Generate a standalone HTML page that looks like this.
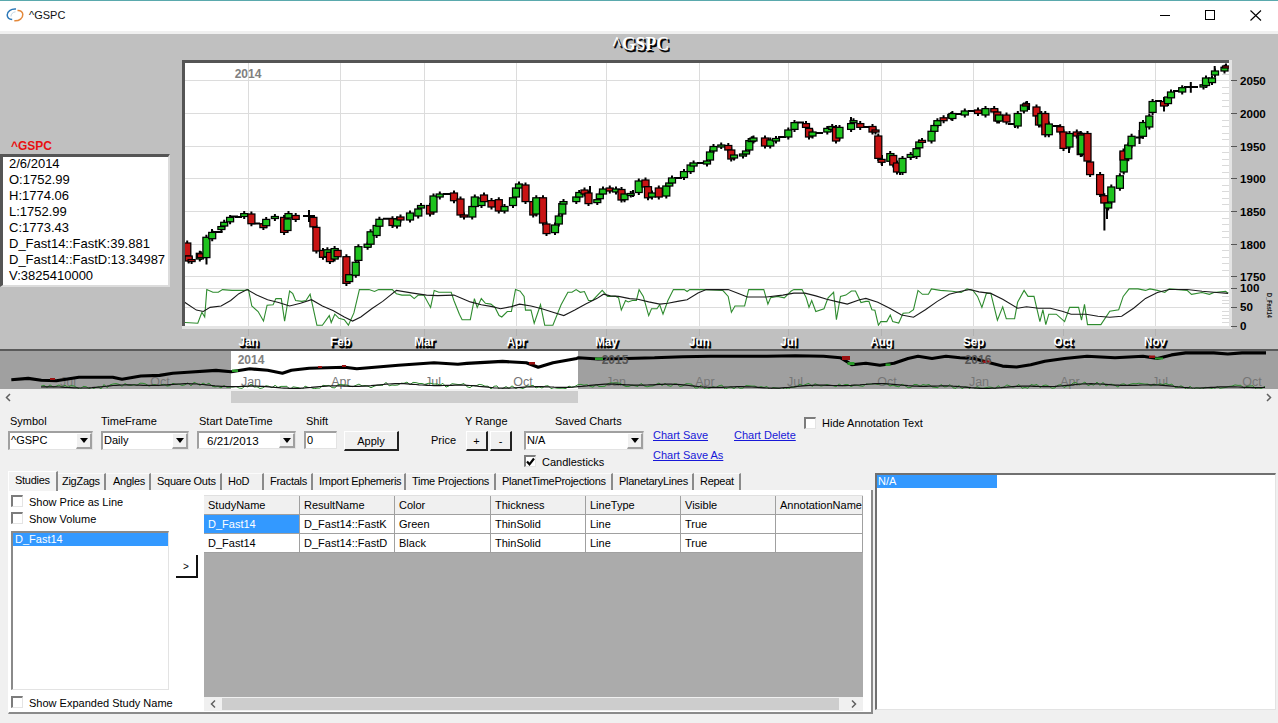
<!DOCTYPE html><html><head><meta charset="utf-8"><style>html,body{margin:0;padding:0}
body{width:1278px;height:723px;overflow:hidden;background:#f0f0f0;font-family:"Liberation Sans",sans-serif;font-size:11px;color:#000;position:relative}
.a{position:absolute}
.t{position:absolute;white-space:nowrap;line-height:13px}
.sunk{position:absolute;background:#fff;box-sizing:border-box;border-top:2px solid #a0a0a0;border-left:2px solid #a0a0a0;border-right:1px solid #e3e3e3;border-bottom:1px solid #e3e3e3}
.dd{position:absolute;box-sizing:border-box;background:#f0f0f0;border-right:2px solid #a0a0a0;border-bottom:2px solid #a0a0a0;border-top:1px solid #fff;border-left:1px solid #fff}
.dd:after{content:"";position:absolute;left:3px;top:4px;border-left:4px solid transparent;border-right:4px solid transparent;border-top:5px solid #000}
.btn{position:absolute;box-sizing:border-box;background:#f0f0f0;border-top:1px solid #fff;border-left:1px solid #fff;border-right:2px solid #222;border-bottom:2px solid #222;text-align:center}
.cb{position:absolute;box-sizing:border-box;width:12px;height:12px;background:#fff;border-top:2px solid #7c7c7c;border-left:2px solid #7c7c7c;border-right:1px solid #e4e4e4;border-bottom:1px solid #e4e4e4}
.lnk{color:#1818d8;text-decoration:underline}
.tab{position:absolute;top:473px;height:17px;border-right:2px solid #8a8a8a;border-top:1px solid #fbfbfb;box-sizing:border-box}
.gh{position:absolute;top:496px;height:19px;background:#f0f0f0;box-sizing:border-box;border-right:1px solid #a0a0a0;border-bottom:1px solid #a0a0a0}
.gc{position:absolute;height:19px;background:#fff;box-sizing:border-box;border-right:1px solid #a0a0a0;border-bottom:1px solid #a0a0a0}
</style></head><body><svg class="a" style="left:0;top:0" width="1278" height="405" font-family="Liberation Sans"><defs><clipPath id="pc"><rect x="185" y="63" width="1044" height="263"/></clipPath></defs><rect x="0" y="34" width="1278" height="316" fill="#c0c0c0"/><text x="0" y="0" transform="translate(642,52) scale(0.93,1)" text-anchor="middle" font-family="Liberation Serif" font-weight="bold" font-size="19" fill="#000" stroke="#000" stroke-width="0.5">^GSPC</text><text x="0" y="0" transform="translate(640.3,50.3) scale(0.93,1)" text-anchor="middle" font-family="Liberation Serif" font-weight="bold" font-size="19" fill="#fff">^GSPC</text><rect x="182" y="60" width="1050" height="269" fill="#e4e4e4"/><rect x="182" y="60" width="1047" height="266" fill="#555"/><rect x="185" y="63" width="1044" height="263" fill="#fff"/><path d="M185 276.5 H1229 M185 244.5 H1229 M185 211.5 H1229 M185 178.5 H1229 M185 146.5 H1229 M185 113.5 H1229 M185 80.5 H1229 M185 288.5 H1229 M185 307.5 H1229 M248.5 63 V326 M340.5 63 V326 M424.5 63 V326 M516.5 63 V326 M606.5 63 V326 M699.5 63 V326 M788.5 63 V326 M881.5 63 V326 M973.5 63 V326 M1063.5 63 V326 M1155.5 63 V326" stroke="#dcdcdc" stroke-width="1" fill="none"/><path d="M248.5 329 V336 M340.5 329 V336 M424.5 329 V336 M516.5 329 V336 M606.5 329 V336 M699.5 329 V336 M788.5 329 V336 M881.5 329 V336 M973.5 329 V336 M1063.5 329 V336 M1155.5 329 V336" stroke="#b0b0b0" stroke-width="1" fill="none"/><path d="M1222 270.5 H1229 M1222 263.5 H1229 M1222 257.5 H1229 M1222 250.5 H1229 M1222 237.5 H1229 M1222 231.5 H1229 M1222 224.5 H1229 M1222 218.5 H1229 M1222 204.5 H1229 M1222 198.5 H1229 M1222 191.5 H1229 M1222 185.5 H1229 M1222 172.5 H1229 M1222 165.5 H1229 M1222 159.5 H1229 M1222 152.5 H1229 M1222 139.5 H1229 M1222 133.5 H1229 M1222 126.5 H1229 M1222 120.5 H1229 M1222 106.5 H1229 M1222 100.5 H1229 M1222 93.5 H1229 M1222 87.5 H1229 M1222 74.5 H1229 M1222 67.5 H1229 M1222 322.5 H1229 M1222 318.5 H1229 M1222 315.5 H1229 M1222 311.5 H1229 M1222 303.5 H1229 M1222 300.5 H1229 M1222 296.5 H1229 M1222 292.5 H1229" stroke="#dadada" stroke-width="1" fill="none"/><text x="248" y="78" text-anchor="middle" font-weight="bold" font-size="12" fill="#808080">2014</text><g clip-path="url(#pc)"><path d="M187.2 240.5 V258.5 M188.7 253.5 V263.5 M191.6 257.1 V264 M199.8 250.8 V261.5 M200.9 251.3 V260.1 M206.4 234.8 V260.1 M212.2 229.9 V241.2 M221.4 224.1 V232 M224.2 219.8 V228.5 M230.1 214.9 V224.3 M244.2 211.1 V219 M251.4 211.5 V226.2 M263.4 221.2 V230.1 M266.2 216.9 V228.2 M274.9 214 V220.9 M284.1 214.9 V234.9 M287.5 216.5 V233 M288.5 211.1 V220.5 M295.7 213 V221.9 M313.4 214.9 V229.3 M316.4 224.9 V253.5 M323 247.9 V259.8 M327.4 247.3 V259.2 M329.9 249.8 V264.1 M334.6 246.1 V261.5 M337.6 247.9 V259.2 M346.4 254.2 V285.9 M349.2 272.2 V284.1 M355.8 259.8 V277.8 M358.4 244.2 V262.9 M367.6 241.7 V249.8 M370.6 229.3 V246.7 M376.6 223 V238 M379.4 216.8 V228.7 M392.5 216.2 V228 M397 216.5 V228.5 M400.5 214.5 V222.5 M410 210.5 V222.5 M418.2 206.5 V218.5 M421 203 V210.5 M430 203 V216.5 M433.5 193.5 V214.5 M439.8 191.5 V199.5 M454 190.5 V203.2 M460.5 196.5 V217.5 M464 212.5 V219.5 M472.2 204 V219.5 M474.8 194.5 V209 M481.5 195.5 V208 M484 192.5 V204.1 M491.5 198.1 V209.5 M498.8 197.2 V213.5 M504.5 204 V213.5 M513 195.3 V208 M516 185.5 V199.5 M519 181.5 V190.5 M525.5 182.5 V204.1 M533.2 199.1 V217.5 M536.3 195.3 V216.5 M543 195.3 V225.5 M546.5 221.5 V236.1 M555 222.5 V235.1 M558.8 213.5 V226.5 M562.2 201.1 V216.5 M563.5 199.1 V206.5 M576.3 194.5 V204.1 M579.2 190 V199.5 M584.5 187.5 V196.5 M588.5 190.5 V206.1 M597.3 197.2 V205.1 M599.8 191.5 V201.2 M603 186.5 V196.5 M609.8 185.5 V193.5 M616 186.5 V194.5 M621.5 187 V202.5 M624.5 191.5 V202.2 M630.8 191 V197.5 M638.8 178.5 V195 M645.5 177.5 V189.5 M648 184.2 V200.3 M652 190.5 V199.5 M658.8 185.5 V199.5 M666.3 183.5 V198.5 M669.2 180.5 V188.5 M672 175.5 V185.5 M684 169.1 V180 M690.6 162.5 V174.1 M693.6 160.5 V168.5 M707 158.5 V166.5 M710 149.5 V162.5 M713.5 144 V153.5 M721.2 142.5 V149 M728.3 143 V152.5 M731.2 147.5 V161.5 M734 152.5 V160.5 M743 151.5 V158.5 M746 148.5 V156.5 M749.3 138.1 V152.5 M751.8 136.2 V144.1 M753.5 135.5 V143.5 M765 135.5 V148.5 M770.2 137.5 V148.5 M776 136 V143.5 M788.3 127.5 V139.5 M794.5 120.1 V131.9 M806 121.1 V129.9 M809 125.9 V139.5 M812.5 129.5 V138.5 M827.3 125.9 V134.5 M832.2 124 V131.9 M836 124.9 V143.5 M839.5 124.9 V140.5 M851.1 121.1 V131.9 M853.5 118.2 V125.1 M860.2 121.1 V129.9 M872.5 124 V134.5 M875.5 127.5 V134.5 M878.3 133.5 V160.9 M881.6 156.9 V164.8 M890.2 151.1 V163.8 M893.2 153 V167.5 M897 160.5 V174.5 M902.5 155.9 V175 M910.7 152 V159.9 M916.5 146.2 V159 M919.2 139.5 V150.3 M922 137.9 V144.8 M931.5 128.8 V143.5 M934.4 123 V133.8 M937.4 118.2 V128 M943.6 115.3 V123.2 M951.2 112 V120.3 M952.4 111 V121 M964.8 108.5 V117.5 M978 107.5 V116 M985.5 106.1 V117.5 M994.2 106.1 V114.5 M997.2 109.5 V123.5 M999 112.5 V123.5 M1006.5 112.5 V124.5 M1017.8 111 V128.5 M1023.9 102.5 V113.5 M1026 101.5 V108.5 M1036.5 104.5 V118.5 M1039 113.5 V127.5 M1041.3 111 V127.5 M1045.3 111 V137.2 M1048.8 121.5 V137.2 M1060.2 124.2 V134.5 M1063.5 129.5 V150.9 M1069.5 131 V149.5 M1076.8 129.5 V138.5 M1080.8 131 V157.1 M1082 132.5 V156.5 M1087.5 131 V163.5 M1090.1 159.5 V177.1 M1100.1 172.1 V197 M1104.3 193.2 V205.5 M1108.2 200.5 V210.5 M1111.3 184.5 V204.5 M1119.9 173.3 V190.8 M1123.7 149.5 V174.5 M1123.5 148.5 V162.5 M1128.3 142.5 V161.3 M1131.6 133.8 V148.3 M1143 120 V138.8 M1149.3 113.5 V129.5 M1152.6 99 V114.9 M1164 99 V108.5 M1168 94.5 V106.1 M1171 89.5 V100.3 M1182.2 85.2 V94.5 M1203.5 82.3 V89.5 M1206 75.5 V88 M1212 75.5 V85.1 M1215 68.5 V77.5 M1224.5 64.8 V73.5 M1226 63.5 V70.5 M206.5 237 V264.4 M212 229 V233 M1104.4 203 V230.6 M1107 205 V219 M1139.5 130 V144 M1164 97 V111.6 M1190.8 82 V92.7 M1214.7 66 V71 M1069 140 V153 M1088 150 V165 M309 210 V222 M355 265 V270 M882 155 V166 M900 165 V175 M633 190 V197 M590 186 V193 M851 117 V124 M1015 120 V128 M1027 101 V106 M1125 145 V160 M1029 103 V110" stroke="#000" stroke-width="2" fill="none"/><path d="M213 232 H222.6 M230 216.5 H238 M235 217 H242 M251 223.5 H260 M303 216 H315 M383 218.7 H392 M443 194 H450 M674 178 H682 M697 163 H705 M778 137 H786 M796 122.6 H804 M815 133 H823 M862 127 H870 M955 114 H963 M968 111 H976 M1008 124 H1016 M1053 126 H1061 M1135.6 137.5 H1144 M1155 101 H1162 M1173 91 H1180 M1184 87 H1192 M1190 87 H1198" stroke="#000" stroke-width="2" fill="none"/><rect x="183.8" y="243" width="7" height="13" fill="#c81414" stroke="#000" stroke-width="1.25"/><rect x="185.2" y="256" width="7" height="5" fill="#c81414" stroke="#000" stroke-width="1.25"/><rect x="188.1" y="259.6" width="7" height="2" fill="#c81414" stroke="#000" stroke-width="1.25"/><rect x="196.3" y="253.3" width="7" height="5.7" fill="#1ec31e" stroke="#000" stroke-width="1.25"/><rect x="197.4" y="253.8" width="7" height="3.8" fill="#c81414" stroke="#000" stroke-width="1.25"/><rect x="202.9" y="237.3" width="7" height="20.3" fill="#1ec31e" stroke="#000" stroke-width="1.25"/><rect x="208.7" y="232.4" width="7" height="6.3" fill="#1ec31e" stroke="#000" stroke-width="1.25"/><rect x="217.9" y="226.6" width="7" height="2.9" fill="#1ec31e" stroke="#000" stroke-width="1.25"/><rect x="220.7" y="222.3" width="7" height="3.7" fill="#1ec31e" stroke="#000" stroke-width="1.25"/><rect x="226.6" y="217.4" width="7" height="4.4" fill="#1ec31e" stroke="#000" stroke-width="1.25"/><rect x="240.7" y="213.6" width="7" height="2.9" fill="#1ec31e" stroke="#000" stroke-width="1.25"/><rect x="247.9" y="214" width="7" height="9.7" fill="#c81414" stroke="#000" stroke-width="1.25"/><rect x="259.9" y="223.7" width="7" height="3.9" fill="#c81414" stroke="#000" stroke-width="1.25"/><rect x="262.7" y="219.4" width="7" height="6.3" fill="#1ec31e" stroke="#000" stroke-width="1.25"/><rect x="271.4" y="216.5" width="7" height="2" fill="#1ec31e" stroke="#000" stroke-width="1.25"/><rect x="280.6" y="217.4" width="7" height="15" fill="#c81414" stroke="#000" stroke-width="1.25"/><rect x="284" y="219" width="7" height="11.5" fill="#1ec31e" stroke="#000" stroke-width="1.25"/><rect x="285" y="213.6" width="7" height="4.4" fill="#1ec31e" stroke="#000" stroke-width="1.25"/><rect x="292.2" y="215.5" width="7" height="3.9" fill="#c81414" stroke="#000" stroke-width="1.25"/><rect x="309.9" y="217.4" width="7" height="9.4" fill="#c81414" stroke="#000" stroke-width="1.25"/><rect x="312.9" y="227.4" width="7" height="23.6" fill="#c81414" stroke="#000" stroke-width="1.25"/><rect x="319.5" y="250.4" width="7" height="6.9" fill="#c81414" stroke="#000" stroke-width="1.25"/><rect x="323.9" y="249.8" width="7" height="6.9" fill="#1ec31e" stroke="#000" stroke-width="1.25"/><rect x="326.4" y="252.3" width="7" height="9.3" fill="#c81414" stroke="#000" stroke-width="1.25"/><rect x="331.1" y="248.6" width="7" height="10.4" fill="#1ec31e" stroke="#000" stroke-width="1.25"/><rect x="334.1" y="250.4" width="7" height="6.3" fill="#c81414" stroke="#000" stroke-width="1.25"/><rect x="342.9" y="256.7" width="7" height="26.7" fill="#c81414" stroke="#000" stroke-width="1.25"/><rect x="345.7" y="274.7" width="7" height="6.9" fill="#1ec31e" stroke="#000" stroke-width="1.25"/><rect x="352.2" y="262.3" width="7" height="13" fill="#1ec31e" stroke="#000" stroke-width="1.25"/><rect x="354.9" y="246.7" width="7" height="13.7" fill="#1ec31e" stroke="#000" stroke-width="1.25"/><rect x="364.1" y="244.2" width="7" height="3.1" fill="#1ec31e" stroke="#000" stroke-width="1.25"/><rect x="367.1" y="231.8" width="7" height="12.4" fill="#1ec31e" stroke="#000" stroke-width="1.25"/><rect x="373.1" y="225.5" width="7" height="10" fill="#1ec31e" stroke="#000" stroke-width="1.25"/><rect x="375.9" y="219.3" width="7" height="6.9" fill="#1ec31e" stroke="#000" stroke-width="1.25"/><rect x="389" y="218.7" width="7" height="6.8" fill="#c81414" stroke="#000" stroke-width="1.25"/><rect x="393.5" y="219" width="7" height="7" fill="#1ec31e" stroke="#000" stroke-width="1.25"/><rect x="397" y="217" width="7" height="3" fill="#c81414" stroke="#000" stroke-width="1.25"/><rect x="406.5" y="213" width="7" height="7" fill="#1ec31e" stroke="#000" stroke-width="1.25"/><rect x="414.8" y="209" width="7" height="7" fill="#1ec31e" stroke="#000" stroke-width="1.25"/><rect x="417.5" y="205.5" width="7" height="2.5" fill="#1ec31e" stroke="#000" stroke-width="1.25"/><rect x="426.5" y="205.5" width="7" height="8.5" fill="#c81414" stroke="#000" stroke-width="1.25"/><rect x="430" y="196" width="7" height="16" fill="#1ec31e" stroke="#000" stroke-width="1.25"/><rect x="436.2" y="194" width="7" height="3" fill="#1ec31e" stroke="#000" stroke-width="1.25"/><rect x="450.5" y="193" width="7" height="7.7" fill="#c81414" stroke="#000" stroke-width="1.25"/><rect x="457" y="199" width="7" height="16" fill="#c81414" stroke="#000" stroke-width="1.25"/><rect x="460.5" y="215" width="7" height="2" fill="#c81414" stroke="#000" stroke-width="1.25"/><rect x="468.8" y="206.5" width="7" height="10.5" fill="#1ec31e" stroke="#000" stroke-width="1.25"/><rect x="471.3" y="197" width="7" height="9.5" fill="#1ec31e" stroke="#000" stroke-width="1.25"/><rect x="478" y="198" width="7" height="7.5" fill="#1ec31e" stroke="#000" stroke-width="1.25"/><rect x="480.5" y="195" width="7" height="6.6" fill="#c81414" stroke="#000" stroke-width="1.25"/><rect x="488" y="200.6" width="7" height="6.4" fill="#c81414" stroke="#000" stroke-width="1.25"/><rect x="495.3" y="199.7" width="7" height="11.3" fill="#c81414" stroke="#000" stroke-width="1.25"/><rect x="501" y="206.5" width="7" height="4.5" fill="#1ec31e" stroke="#000" stroke-width="1.25"/><rect x="509.5" y="197.8" width="7" height="7.7" fill="#1ec31e" stroke="#000" stroke-width="1.25"/><rect x="512.5" y="188" width="7" height="9" fill="#1ec31e" stroke="#000" stroke-width="1.25"/><rect x="515.5" y="184" width="7" height="4" fill="#1ec31e" stroke="#000" stroke-width="1.25"/><rect x="522" y="185" width="7" height="16.6" fill="#c81414" stroke="#000" stroke-width="1.25"/><rect x="529.8" y="201.6" width="7" height="13.4" fill="#c81414" stroke="#000" stroke-width="1.25"/><rect x="532.8" y="197.8" width="7" height="16.2" fill="#1ec31e" stroke="#000" stroke-width="1.25"/><rect x="539.5" y="197.8" width="7" height="25.2" fill="#c81414" stroke="#000" stroke-width="1.25"/><rect x="543" y="224" width="7" height="9.6" fill="#c81414" stroke="#000" stroke-width="1.25"/><rect x="551.5" y="225" width="7" height="7.6" fill="#1ec31e" stroke="#000" stroke-width="1.25"/><rect x="555.3" y="216" width="7" height="8" fill="#1ec31e" stroke="#000" stroke-width="1.25"/><rect x="558.8" y="203.6" width="7" height="10.4" fill="#1ec31e" stroke="#000" stroke-width="1.25"/><rect x="560" y="201.6" width="7" height="2.4" fill="#1ec31e" stroke="#000" stroke-width="1.25"/><rect x="572.8" y="197" width="7" height="4.6" fill="#1ec31e" stroke="#000" stroke-width="1.25"/><rect x="575.8" y="192.5" width="7" height="4.5" fill="#1ec31e" stroke="#000" stroke-width="1.25"/><rect x="581" y="190" width="7" height="4" fill="#c81414" stroke="#000" stroke-width="1.25"/><rect x="585" y="193" width="7" height="10.6" fill="#c81414" stroke="#000" stroke-width="1.25"/><rect x="593.8" y="199.7" width="7" height="2.9" fill="#1ec31e" stroke="#000" stroke-width="1.25"/><rect x="596.3" y="194" width="7" height="4.7" fill="#1ec31e" stroke="#000" stroke-width="1.25"/><rect x="599.5" y="189" width="7" height="5" fill="#1ec31e" stroke="#000" stroke-width="1.25"/><rect x="606.2" y="188" width="7" height="3" fill="#c81414" stroke="#000" stroke-width="1.25"/><rect x="612.5" y="189" width="7" height="3" fill="#1ec31e" stroke="#000" stroke-width="1.25"/><rect x="618" y="189.5" width="7" height="10.5" fill="#c81414" stroke="#000" stroke-width="1.25"/><rect x="621" y="194" width="7" height="5.7" fill="#1ec31e" stroke="#000" stroke-width="1.25"/><rect x="627.2" y="193.5" width="7" height="2" fill="#1ec31e" stroke="#000" stroke-width="1.25"/><rect x="635.2" y="181" width="7" height="11.5" fill="#1ec31e" stroke="#000" stroke-width="1.25"/><rect x="642" y="180" width="7" height="7" fill="#c81414" stroke="#000" stroke-width="1.25"/><rect x="644.5" y="186.7" width="7" height="11.1" fill="#c81414" stroke="#000" stroke-width="1.25"/><rect x="648.5" y="193" width="7" height="4" fill="#1ec31e" stroke="#000" stroke-width="1.25"/><rect x="655.3" y="188" width="7" height="9" fill="#c81414" stroke="#000" stroke-width="1.25"/><rect x="662.8" y="186" width="7" height="10" fill="#1ec31e" stroke="#000" stroke-width="1.25"/><rect x="665.8" y="183" width="7" height="3" fill="#1ec31e" stroke="#000" stroke-width="1.25"/><rect x="668.5" y="178" width="7" height="5" fill="#1ec31e" stroke="#000" stroke-width="1.25"/><rect x="680.5" y="171.6" width="7" height="5.9" fill="#1ec31e" stroke="#000" stroke-width="1.25"/><rect x="687.1" y="165" width="7" height="6.6" fill="#1ec31e" stroke="#000" stroke-width="1.25"/><rect x="690.1" y="163" width="7" height="3" fill="#1ec31e" stroke="#000" stroke-width="1.25"/><rect x="703.5" y="161" width="7" height="3" fill="#1ec31e" stroke="#000" stroke-width="1.25"/><rect x="706.5" y="152" width="7" height="8" fill="#1ec31e" stroke="#000" stroke-width="1.25"/><rect x="710" y="146.5" width="7" height="4.5" fill="#1ec31e" stroke="#000" stroke-width="1.25"/><rect x="717.8" y="145" width="7" height="2" fill="#1ec31e" stroke="#000" stroke-width="1.25"/><rect x="724.8" y="145.5" width="7" height="4.5" fill="#c81414" stroke="#000" stroke-width="1.25"/><rect x="727.8" y="150" width="7" height="9" fill="#c81414" stroke="#000" stroke-width="1.25"/><rect x="730.5" y="155" width="7" height="3" fill="#1ec31e" stroke="#000" stroke-width="1.25"/><rect x="739.5" y="154" width="7" height="2" fill="#1ec31e" stroke="#000" stroke-width="1.25"/><rect x="742.5" y="151" width="7" height="3" fill="#1ec31e" stroke="#000" stroke-width="1.25"/><rect x="745.8" y="140.6" width="7" height="9.4" fill="#1ec31e" stroke="#000" stroke-width="1.25"/><rect x="748.2" y="138.7" width="7" height="2.9" fill="#1ec31e" stroke="#000" stroke-width="1.25"/><rect x="750" y="138" width="7" height="3" fill="#1ec31e" stroke="#000" stroke-width="1.25"/><rect x="761.5" y="138" width="7" height="8" fill="#c81414" stroke="#000" stroke-width="1.25"/><rect x="766.8" y="140" width="7" height="6" fill="#1ec31e" stroke="#000" stroke-width="1.25"/><rect x="772.5" y="138.5" width="7" height="2.5" fill="#1ec31e" stroke="#000" stroke-width="1.25"/><rect x="784.8" y="130" width="7" height="7" fill="#1ec31e" stroke="#000" stroke-width="1.25"/><rect x="791" y="122.6" width="7" height="6.8" fill="#1ec31e" stroke="#000" stroke-width="1.25"/><rect x="802.5" y="123.6" width="7" height="3.8" fill="#c81414" stroke="#000" stroke-width="1.25"/><rect x="805.5" y="128.4" width="7" height="8.6" fill="#c81414" stroke="#000" stroke-width="1.25"/><rect x="809" y="132" width="7" height="4" fill="#1ec31e" stroke="#000" stroke-width="1.25"/><rect x="823.8" y="128.4" width="7" height="3.6" fill="#1ec31e" stroke="#000" stroke-width="1.25"/><rect x="828.7" y="126.5" width="7" height="2.9" fill="#1ec31e" stroke="#000" stroke-width="1.25"/><rect x="832.5" y="127.4" width="7" height="13.6" fill="#c81414" stroke="#000" stroke-width="1.25"/><rect x="836" y="127.4" width="7" height="10.6" fill="#1ec31e" stroke="#000" stroke-width="1.25"/><rect x="847.6" y="123.6" width="7" height="5.8" fill="#1ec31e" stroke="#000" stroke-width="1.25"/><rect x="850" y="120.7" width="7" height="2" fill="#1ec31e" stroke="#000" stroke-width="1.25"/><rect x="856.8" y="123.6" width="7" height="3.8" fill="#c81414" stroke="#000" stroke-width="1.25"/><rect x="869" y="126.5" width="7" height="5.5" fill="#c81414" stroke="#000" stroke-width="1.25"/><rect x="872" y="130" width="7" height="2" fill="#c81414" stroke="#000" stroke-width="1.25"/><rect x="874.8" y="136" width="7" height="22.4" fill="#c81414" stroke="#000" stroke-width="1.25"/><rect x="878.1" y="159.4" width="7" height="2.9" fill="#c81414" stroke="#000" stroke-width="1.25"/><rect x="886.8" y="153.6" width="7" height="7.7" fill="#1ec31e" stroke="#000" stroke-width="1.25"/><rect x="889.7" y="155.5" width="7" height="9.5" fill="#c81414" stroke="#000" stroke-width="1.25"/><rect x="893.5" y="163" width="7" height="9" fill="#c81414" stroke="#000" stroke-width="1.25"/><rect x="899" y="158.4" width="7" height="14.1" fill="#1ec31e" stroke="#000" stroke-width="1.25"/><rect x="907.2" y="154.5" width="7" height="2.9" fill="#1ec31e" stroke="#000" stroke-width="1.25"/><rect x="913" y="148.7" width="7" height="7.8" fill="#1ec31e" stroke="#000" stroke-width="1.25"/><rect x="915.8" y="142" width="7" height="5.8" fill="#1ec31e" stroke="#000" stroke-width="1.25"/><rect x="918.5" y="140.4" width="7" height="2" fill="#c81414" stroke="#000" stroke-width="1.25"/><rect x="928" y="131.3" width="7" height="9.7" fill="#1ec31e" stroke="#000" stroke-width="1.25"/><rect x="930.9" y="125.5" width="7" height="5.8" fill="#1ec31e" stroke="#000" stroke-width="1.25"/><rect x="933.9" y="120.7" width="7" height="4.8" fill="#1ec31e" stroke="#000" stroke-width="1.25"/><rect x="940.1" y="117.8" width="7" height="2.9" fill="#c81414" stroke="#000" stroke-width="1.25"/><rect x="947.8" y="114.5" width="7" height="3.3" fill="#1ec31e" stroke="#000" stroke-width="1.25"/><rect x="948.9" y="113.5" width="7" height="5" fill="#1ec31e" stroke="#000" stroke-width="1.25"/><rect x="961.3" y="111" width="7" height="4" fill="#1ec31e" stroke="#000" stroke-width="1.25"/><rect x="974.5" y="110" width="7" height="3.5" fill="#c81414" stroke="#000" stroke-width="1.25"/><rect x="982" y="108.6" width="7" height="6.4" fill="#1ec31e" stroke="#000" stroke-width="1.25"/><rect x="990.8" y="108.6" width="7" height="3.4" fill="#c81414" stroke="#000" stroke-width="1.25"/><rect x="993.8" y="112" width="7" height="9" fill="#c81414" stroke="#000" stroke-width="1.25"/><rect x="995.5" y="115" width="7" height="6" fill="#1ec31e" stroke="#000" stroke-width="1.25"/><rect x="1003" y="115" width="7" height="7" fill="#c81414" stroke="#000" stroke-width="1.25"/><rect x="1014.2" y="113.5" width="7" height="12.5" fill="#1ec31e" stroke="#000" stroke-width="1.25"/><rect x="1020.4" y="105" width="7" height="6" fill="#1ec31e" stroke="#000" stroke-width="1.25"/><rect x="1022.5" y="104" width="7" height="2" fill="#c81414" stroke="#000" stroke-width="1.25"/><rect x="1033" y="107" width="7" height="9" fill="#c81414" stroke="#000" stroke-width="1.25"/><rect x="1035.5" y="116" width="7" height="9" fill="#c81414" stroke="#000" stroke-width="1.25"/><rect x="1037.8" y="113.5" width="7" height="11.5" fill="#1ec31e" stroke="#000" stroke-width="1.25"/><rect x="1041.8" y="113.5" width="7" height="21.2" fill="#c81414" stroke="#000" stroke-width="1.25"/><rect x="1045.3" y="124" width="7" height="10.7" fill="#1ec31e" stroke="#000" stroke-width="1.25"/><rect x="1056.8" y="126.7" width="7" height="5.3" fill="#c81414" stroke="#000" stroke-width="1.25"/><rect x="1060" y="132" width="7" height="16.4" fill="#c81414" stroke="#000" stroke-width="1.25"/><rect x="1066" y="133.5" width="7" height="13.5" fill="#1ec31e" stroke="#000" stroke-width="1.25"/><rect x="1073.3" y="132" width="7" height="4" fill="#c81414" stroke="#000" stroke-width="1.25"/><rect x="1077.2" y="133.5" width="7" height="21.1" fill="#c81414" stroke="#000" stroke-width="1.25"/><rect x="1078.5" y="135" width="7" height="19" fill="#1ec31e" stroke="#000" stroke-width="1.25"/><rect x="1084" y="133.5" width="7" height="27.5" fill="#c81414" stroke="#000" stroke-width="1.25"/><rect x="1086.6" y="162" width="7" height="12.6" fill="#c81414" stroke="#000" stroke-width="1.25"/><rect x="1096.6" y="174.6" width="7" height="19.9" fill="#c81414" stroke="#000" stroke-width="1.25"/><rect x="1100.8" y="195.7" width="7" height="7.3" fill="#c81414" stroke="#000" stroke-width="1.25"/><rect x="1104.7" y="203" width="7" height="5" fill="#1ec31e" stroke="#000" stroke-width="1.25"/><rect x="1107.8" y="187" width="7" height="15" fill="#1ec31e" stroke="#000" stroke-width="1.25"/><rect x="1116.4" y="175.8" width="7" height="12.5" fill="#1ec31e" stroke="#000" stroke-width="1.25"/><rect x="1120.2" y="152" width="7" height="20" fill="#1ec31e" stroke="#000" stroke-width="1.25"/><rect x="1120" y="151" width="7" height="9" fill="#c81414" stroke="#000" stroke-width="1.25"/><rect x="1124.8" y="145" width="7" height="13.8" fill="#1ec31e" stroke="#000" stroke-width="1.25"/><rect x="1128.1" y="136.3" width="7" height="9.5" fill="#1ec31e" stroke="#000" stroke-width="1.25"/><rect x="1139.5" y="122.5" width="7" height="13.8" fill="#1ec31e" stroke="#000" stroke-width="1.25"/><rect x="1145.8" y="116" width="7" height="11" fill="#1ec31e" stroke="#000" stroke-width="1.25"/><rect x="1149.1" y="101.5" width="7" height="10.9" fill="#1ec31e" stroke="#000" stroke-width="1.25"/><rect x="1160.5" y="101.5" width="7" height="4.5" fill="#c81414" stroke="#000" stroke-width="1.25"/><rect x="1164.5" y="97" width="7" height="6.6" fill="#1ec31e" stroke="#000" stroke-width="1.25"/><rect x="1167.5" y="92" width="7" height="5.8" fill="#1ec31e" stroke="#000" stroke-width="1.25"/><rect x="1178.7" y="87.7" width="7" height="4.3" fill="#1ec31e" stroke="#000" stroke-width="1.25"/><rect x="1200" y="84.8" width="7" height="2.2" fill="#1ec31e" stroke="#000" stroke-width="1.25"/><rect x="1202.5" y="78" width="7" height="7.5" fill="#1ec31e" stroke="#000" stroke-width="1.25"/><rect x="1208.5" y="78" width="7" height="4.6" fill="#1ec31e" stroke="#000" stroke-width="1.25"/><rect x="1211.5" y="71" width="7" height="4" fill="#1ec31e" stroke="#000" stroke-width="1.25"/><rect x="1221" y="67.3" width="7" height="3.7" fill="#1ec31e" stroke="#000" stroke-width="1.25"/><rect x="1222.5" y="66" width="7" height="2" fill="#c81414" stroke="#000" stroke-width="1.25"/></g><g clip-path="url(#pc)"><polyline points="184.1,322.5 197.8,323.3 201.9,312.3 204.7,317 206.8,289.6 212.9,292.3 218.3,292.3 222.5,289.6 232,290.4 244.4,290.4 248.5,289.6 251.8,306 258.1,311.5 263.5,321.1 267.1,305.2 273.1,304.7 275.9,298.6 281.3,298.6 284.6,321.1 289.6,291 292.8,293.7 295.6,300.5 301.9,301.4 306,300.5 310.1,294.2 316.9,325.2 322.4,325.2 329.3,315.6 331.2,322.5 334.8,314.2 338.9,318.3 344.3,319.7 348.4,325.2 353.9,312.9 359.4,289.6 369,289.6 374.5,291.5 378.6,289.6 392.3,289.6 396.4,293.7 401.9,295.1 410.1,295.1 414.2,298.6 418.3,295.1 423.8,295.1 430.6,307.4 434.2,290.4 438.8,292.3 451.2,292.3 453.9,300.5 459.4,314.2 462.1,319.7 470.3,319.7 474.4,298.6 477.2,307.4 481.3,298.6 485.4,303.3 490.9,304.1 495,307.4 499.1,315.6 501.8,317 507.3,311.5 511.4,311.5 515.5,289.6 519.6,291 520,291 524.1,296.4 525.5,310.1 531,310.1 534.2,323.3 540.5,304.7 544.7,325.2 552.9,325.2 561.1,304.7 567.9,292.3 572,292.3 576.1,289.6 580.3,292.3 584.4,291.5 588.5,300.5 592.6,300.5 602.2,290.4 607.6,296.4 615.9,296.4 618.6,297.8 621.3,310.1 625.5,300.5 628.2,301.9 632.3,300.5 636.4,300.5 639.1,289.6 643.3,296.4 648.7,315.6 651.5,308.8 656.9,308.8 659.7,304.7 663,314.2 667.9,300.5 673.4,289.6 684.3,289.6 687.1,291.5 689.8,289.6 706.3,289.6 722.7,290.4 728.2,296.4 731.4,312.3 735,306 744.6,306 748.7,289.6 763.8,289.6 767.9,304.1 770.6,297.8 777.5,296.4 784.3,297.8 791.2,291 793.9,289.6 802.1,289.6 806.2,297.8 809,307.4 811.7,300.5 815.8,311.5 824,308.8 828.1,297.8 833.6,292.3 836.4,319.7 840.5,296.4 845.9,295.1 851.4,291 855.5,291 861,302.5 865.9,301.4 868.9,301.4 871.9,309.7 874.9,310.3 878.4,325.2 880.8,321.6 886.8,321.6 890.3,315.1 892.7,321.6 898.7,323.1 903.1,313.3 909.1,312.7 913.5,309.7 918,290.4 922.4,294.3 928.4,294.3 931.4,288.9 940.3,290.4 952.2,291.3 961.1,292.5 967,288.9 973,290.4 977.5,296.4 981.9,307.4 986.4,293.4 990.8,293.4 997.4,320.1 1002.7,306.8 1006.3,318.7 1014.6,318.7 1017.6,302.3 1024.1,290.4 1028,296.4 1034,296.4 1039.9,321.6 1042.9,309.7 1045.8,324.6 1048.8,314.2 1056.3,314.2 1064.6,321.6 1069.6,307.4 1078.6,307.4 1081.5,320.1 1084.5,304.4 1087.5,324.6 1100.9,324.6 1109.8,311.2 1118.7,309.7 1123.2,296.4 1129.1,288.9 1138,288.9 1145.5,290.4 1149.9,288.9 1157.4,290.4 1164.8,292.5 1169.2,288.9 1187.1,290.4 1191.5,294.3 1202,292.5 1209.4,294.3 1213.9,292.5 1225.7,291.3 1228.1,293.4" stroke="#2e8b2e" stroke-width="1.1" fill="none"/><polyline points="184.1,301.9 196.4,310.1 203.3,311.5 210.1,307.4 221.1,306 230.7,300.5 238.9,293.7 247.1,289.6 256.7,295.1 267.6,299.7 278.6,302.5 289.6,306 300.5,303.3 311.5,299.7 322.4,306 333.4,310.7 344.3,317 352.6,321.1 360.8,317 371.7,308.8 382.7,301.4 396.4,290.4 412.8,293.1 426.5,295.1 437.5,295.6 453.9,295.1 462.1,298.6 470.3,301.9 481.3,304.7 492.2,306.6 500.5,308.8 511.4,306.6 519.6,304.1 531,306 541.9,308.8 552.9,312.3 563.8,315.6 574.8,310.1 585.7,304.1 596.7,298.6 603.5,294.2 610.4,295.9 618.6,296.4 629.6,298.6 637.8,299.2 648.7,301.9 659.7,304.1 667.9,303.3 678.9,301.1 687.1,299.7 698,293.1 706.3,289.6 728.2,289.6 739.1,293.7 747.3,297 766.5,297 782.9,295.1 793.9,293.1 804.9,293.1 815.8,295.9 826.8,299.2 837.7,301.9 847.3,304.1 859.6,299.7 865.9,298.4 877.8,302.3 889.7,308.2 901.6,315.1 913.5,317.2 925.4,309.7 937.3,301.4 949.2,294.3 961.1,291.3 970,289.5 978.9,291.9 990.8,293.4 1002.7,299.3 1017.6,308.2 1026.5,306.8 1038.4,308.2 1050.3,308.2 1062.2,311.2 1071.1,314.2 1086,314.2 1097.9,316.3 1109.8,317.2 1121.7,316.3 1133.6,308.2 1145.5,298.4 1157.4,292.5 1169.2,289.5 1187.1,289.5 1202,291.3 1216.8,292.5 1228.1,293.4" stroke="#1a1a1a" stroke-width="1.1" fill="none"/></g><path d="M1231 276.5 H1237 M1231 244.5 H1237 M1231 211.5 H1237 M1231 178.5 H1237 M1231 146.5 H1237 M1231 113.5 H1237 M1231 80.5 H1237 M1231 288.5 H1237 M1231 307.5 H1237 M1231 326.5 H1237" stroke="#555" stroke-width="1.2" fill="none"/><text x="1240" y="281" font-weight="bold" font-size="11.6" fill="#000">1750</text><text x="1240" y="249" font-weight="bold" font-size="11.6" fill="#000">1800</text><text x="1240" y="216" font-weight="bold" font-size="11.6" fill="#000">1850</text><text x="1240" y="183" font-weight="bold" font-size="11.6" fill="#000">1900</text><text x="1240" y="151" font-weight="bold" font-size="11.6" fill="#000">1950</text><text x="1240" y="118" font-weight="bold" font-size="11.6" fill="#000">2000</text><text x="1240" y="85" font-weight="bold" font-size="11.6" fill="#000">2050</text><text x="1240" y="292.3" font-weight="bold" font-size="11.6" fill="#000">100</text><text x="1240" y="311.3" font-weight="bold" font-size="11.6" fill="#000">50</text><text x="1240" y="330.3" font-weight="bold" font-size="11.6" fill="#000">0</text><text transform="translate(1266.5,293) rotate(90)" font-size="8" font-weight="bold" textLength="25" lengthAdjust="spacingAndGlyphs" fill="#111">D_Fast14</text><text transform="translate(250.1,347.6) scale(0.9,1)" text-anchor="middle" font-weight="bold" font-size="13" fill="#000" stroke="#000" stroke-width="0.8">Jan</text><text transform="translate(248.6,346.2) scale(0.9,1)" text-anchor="middle" font-weight="bold" font-size="13" fill="#fff">Jan</text><text transform="translate(341.9,347.6) scale(0.9,1)" text-anchor="middle" font-weight="bold" font-size="13" fill="#000" stroke="#000" stroke-width="0.8">Feb</text><text transform="translate(340.4,346.2) scale(0.9,1)" text-anchor="middle" font-weight="bold" font-size="13" fill="#fff">Feb</text><text transform="translate(426.1,347.6) scale(0.9,1)" text-anchor="middle" font-weight="bold" font-size="13" fill="#000" stroke="#000" stroke-width="0.8">Mar</text><text transform="translate(424.6,346.2) scale(0.9,1)" text-anchor="middle" font-weight="bold" font-size="13" fill="#fff">Mar</text><text transform="translate(518.1,347.6) scale(0.9,1)" text-anchor="middle" font-weight="bold" font-size="13" fill="#000" stroke="#000" stroke-width="0.8">Apr</text><text transform="translate(516.6,346.2) scale(0.9,1)" text-anchor="middle" font-weight="bold" font-size="13" fill="#fff">Apr</text><text transform="translate(608,347.6) scale(0.9,1)" text-anchor="middle" font-weight="bold" font-size="13" fill="#000" stroke="#000" stroke-width="0.8">May</text><text transform="translate(606.5,346.2) scale(0.9,1)" text-anchor="middle" font-weight="bold" font-size="13" fill="#fff">May</text><text transform="translate(700.9,347.6) scale(0.9,1)" text-anchor="middle" font-weight="bold" font-size="13" fill="#000" stroke="#000" stroke-width="0.8">Jun</text><text transform="translate(699.4,346.2) scale(0.9,1)" text-anchor="middle" font-weight="bold" font-size="13" fill="#fff">Jun</text><text transform="translate(790.2,347.6) scale(0.9,1)" text-anchor="middle" font-weight="bold" font-size="13" fill="#000" stroke="#000" stroke-width="0.8">Jul</text><text transform="translate(788.7,346.2) scale(0.9,1)" text-anchor="middle" font-weight="bold" font-size="13" fill="#fff">Jul</text><text transform="translate(883.1,347.6) scale(0.9,1)" text-anchor="middle" font-weight="bold" font-size="13" fill="#000" stroke="#000" stroke-width="0.8">Aug</text><text transform="translate(881.6,346.2) scale(0.9,1)" text-anchor="middle" font-weight="bold" font-size="13" fill="#fff">Aug</text><text transform="translate(975.1,347.6) scale(0.9,1)" text-anchor="middle" font-weight="bold" font-size="13" fill="#000" stroke="#000" stroke-width="0.8">Sep</text><text transform="translate(973.6,346.2) scale(0.9,1)" text-anchor="middle" font-weight="bold" font-size="13" fill="#fff">Sep</text><text transform="translate(1064.8,347.6) scale(0.9,1)" text-anchor="middle" font-weight="bold" font-size="13" fill="#000" stroke="#000" stroke-width="0.8">Oct</text><text transform="translate(1063.3,346.2) scale(0.9,1)" text-anchor="middle" font-weight="bold" font-size="13" fill="#fff">Oct</text><text transform="translate(1156.5,347.6) scale(0.9,1)" text-anchor="middle" font-weight="bold" font-size="13" fill="#000" stroke="#000" stroke-width="0.8">Nov</text><text transform="translate(1155,346.2) scale(0.9,1)" text-anchor="middle" font-weight="bold" font-size="13" fill="#fff">Nov</text><rect x="0" y="349" width="1278" height="2" fill="#5a5a5a"/><rect x="0" y="351" width="1278" height="38.5" fill="#a0a0a0"/><rect x="231" y="351" width="347" height="38.5" fill="#fff"/><text x="68" y="385.5" text-anchor="middle" font-size="12.5" fill="#767676">Jul</text><text x="160" y="385.5" text-anchor="middle" font-size="12.5" fill="#767676">Oct</text><text x="251" y="385.5" text-anchor="middle" font-size="12.5" fill="#767676">Jan</text><text x="341" y="385.5" text-anchor="middle" font-size="12.5" fill="#767676">Apr</text><text x="433" y="385.5" text-anchor="middle" font-size="12.5" fill="#767676">Jul</text><text x="523" y="385.5" text-anchor="middle" font-size="12.5" fill="#767676">Oct</text><text x="616" y="385.5" text-anchor="middle" font-size="12.5" fill="#767676">Jan</text><text x="705" y="385.5" text-anchor="middle" font-size="12.5" fill="#767676">Apr</text><text x="795" y="385.5" text-anchor="middle" font-size="12.5" fill="#767676">Jul</text><text x="887" y="385.5" text-anchor="middle" font-size="12.5" fill="#767676">Oct</text><text x="979" y="385.5" text-anchor="middle" font-size="12.5" fill="#767676">Jan</text><text x="1070" y="385.5" text-anchor="middle" font-size="12.5" fill="#767676">Apr</text><text x="1160" y="385.5" text-anchor="middle" font-size="12.5" fill="#767676">Jul</text><text x="1252" y="385.5" text-anchor="middle" font-size="12.5" fill="#767676">Oct</text><polyline points="11.3,379.7 28.2,378.4 41.3,380.3 56.3,380.7 78.9,377.3 112.7,377.3 122,379.2 140.8,376 159.6,375.4 172.8,373.2 187.8,372.2 216,370.4 231.3,371.8 249.7,368.8 267.6,370.3 282.4,373.2 291.4,370.3 309.2,368.2 344.9,367.3 356.8,368.8 398.4,365.2 434,362.8 457.9,364.3 466.8,363.4 502.5,361.4 526.3,362.8 538.2,367.3 553,362.8 576.8,358.4 578.5,357.7 598,359 626,358.5 654.5,357.7 682.7,356.8 710.8,356.3 739,356.3 767,356.3 795.4,355.7 823.5,356.3 840.4,357.7 847.5,362 851.7,364.7 865.8,363.3 879.9,365.3 894,363.3 908,358.5 918,356.3 932,358.5 946,356.3 960,357.7 974,358.5 988.4,362.5 1002.5,366.1 1016.6,367 1030.7,364.7 1044.8,361.3 1064.5,358.5 1087,356.3 1115,357.7 1143,356.3 1157.4,358.5 1171.5,354.9 1185.6,352.9 1213.8,352.9 1227.8,354 1242,352.9 1266,352.9" stroke="#000" stroke-width="3.1" fill="none" stroke-linejoin="bevel"/><rect x="232" y="369.5" width="6" height="2.5" fill="#2a9a2a"/><rect x="318" y="366" width="4" height="2" fill="#9a1010"/><rect x="342" y="365" width="4" height="2" fill="#9a1010"/><rect x="529" y="362" width="6" height="2.5" fill="#9a1010"/><rect x="595" y="357.5" width="8" height="2.5" fill="#2a9a2a"/><rect x="842" y="356" width="8" height="4" fill="#9a1010"/><rect x="847.5" y="362" width="7" height="3" fill="#2a9a2a"/><rect x="885.5" y="363.5" width="5" height="2.5" fill="#2a9a2a"/><rect x="983" y="360.5" width="8" height="2.5" fill="#9a1010"/><rect x="1149" y="355.5" width="6" height="2.5" fill="#9a1010"/><rect x="1155" y="357.5" width="8" height="2" fill="#2a9a2a"/><rect x="50" y="378" width="5" height="2" fill="#9a1010"/><text x="251" y="364" text-anchor="middle" font-weight="bold" font-size="12" fill="#808080">2014</text><text x="615" y="364" text-anchor="middle" font-weight="bold" font-size="12" fill="#555">2015</text><text x="978" y="364" text-anchor="middle" font-weight="bold" font-size="12" fill="#555">2016</text><polyline points="41,386.2 44,385.3 47,387.5 50,384.9 53,386.9 56,386.3 59,385 62,387.1 65,385.2 68,387.2 71,385.7 74,386 77,387.6 80,389.4 83,386.4 86,386.7 89,388.4 92,389.6 95,387.8 98,386.7 101,388.9 104,384.5 107,387.7 110,384.9 113,384 116,383.6 119,384.3 122,386.3 125,383.5 128,385.2 131,385.5 134,384.4 137,385.3 140,383.2 143,383.3 146,384.1 149,386.2 152,385.1 155,384.6 158,385.7 161,385 164,384.2 167,386.1 170,385.5 173,383.3 176,384.5 179,384.1 182,385.5 185,384.8 188,382.8 191,385.9 194,382.2 197,383.7 200,385.4 203,383 206,384.8 209,383.1 212,386.2 215,386.9 218,386.4 221,387.9 224,385.6 227,387.4 230,387 233,387 236,386.4 239,388 242,388.4 245,386.2 248,387 251,384.2 254,387.1 257,386.8 260,388.5 263,387.8 266,385.7 269,386.3 272,387.8 275,385.3 278,387.5 281,386.4 284,386.4 287,386.3 290,389.5 293,386.8 296,387.3 299,387.8 302,389.7 305,386.1 308,387.4 311,387.6 314,388.8 317,388.2 320,388.1 323,385.3 326,385.8 329,385.4 332,387.6 335,387.9 338,384.4 341,384.6 344,384.9 347,385 350,386.2 353,386.7 356,385.3 359,384.1 362,385.9 365,385.5 368,386.2 371,387.7 374,386.3 377,385.2 380,385.3 383,385.3 386,382.3 389,385.8 392,385.1 395,385.3 398,385 401,383.2 404,383.3 407,382.1 410,384.7 413,382.4 416,382.6 419,383.5 422,383.5 425,384.5 428,383.4 431,383.3 434,384.1 437,383.9 440,385 443,383.4 446,387.1 449,385.9 452,383.7 455,384.1 458,384.5 461,384.5 464,383.5 467,386.8 470,387.6 473,385.5 476,385.9 479,384.4 482,384.8 485,386.2 488,386.2 491,389 494,386.3 497,385.9 500,390.1 503,388.3 506,386.6 509,388.3 512,385.9 515,387.9 518,389.7 521,389 524,388.1 527,386 530,386.3 533,385.3 536,387.9 539,386.8 542,388 545,386.1 548,385.7 551,388.4 554,389.3 557,388.8 560,388.7 563,388.8 566,388.4 569,386.1 572,387.3 575,386.4 578,384.7 581,384.4 584,385.2 587,384.7 590,386.3 593,387.1 596,384.6 599,386.5 602,386.5 605,386.2 608,383.6 611,382.9 614,383 617,383 620,383.2 623,385.2 626,386.5 629,386.4 632,385 635,385.8 638,386.5 641,383.4 644,385.8 647,386.8 650,386.2 653,385.9 656,384.5 659,383 662,385.6 665,383.5 668,385.5 671,386.3 674,383.8 677,384 680,386.6 683,385.8 686,383.7 689,383.8 692,384.3 695,388 698,387.8 701,385.2 704,388.5 707,389.3 710,388 713,386.7 716,387.6 719,385.7 722,385.1 725,389.2 728,387.7 731,387 734,388.7 737,386.4 740,388.3 743,388.1 746,385.5 749,385.8 752,386.1 755,386.1 758,387.8 761,386.6 764,387.5 767,386.4 770,389.9 773,387.5 776,388 779,388.4 782,389.7 785,387.4 788,389.3 791,387.2 794,387 797,386.6 800,384.1 803,385.7 806,384.3 809,383.3 812,386.6 815,383.7 818,385 821,386.1 824,385.4 827,384.5 830,385.4 833,385.7 836,386.8 839,383.9 842,385.9 845,384.5 848,384.5 851,386.6 854,385.2 857,385.3 860,385.9 863,386.3 866,384 869,384.5 872,383.9 875,383.8 878,384.5 881,383.4 884,383.9 887,383.7 890,386 893,385.1 896,386.2 899,386.8 902,384.1 905,385.7 908,387.7 911,387.4 914,384.5 917,384.6 920,386.1 923,384.5 926,385.2 929,384.4 932,386.9 935,387.3 938,387.7 941,384.4 944,386.9 947,386.7 950,384.5 953,387.8 956,388.4 959,385.3 962,388.8 965,386.7 968,387.3 971,389.8 974,389.4 977,386.6 980,388 983,388.4 986,387.7 989,387 992,387.4 995,389 998,385.7 1001,387.8 1004,387.1 1007,384.9 1010,386.1 1013,387.1 1016,386.5 1019,384.4 1022,388.3 1025,387.4 1028,388.3 1031,384.5 1034,385.3 1037,384.4 1040,387.7 1043,385.6 1046,385 1049,386.3 1052,388.3 1055,387.8 1058,385.2 1061,384.5 1064,387.6 1067,385.8 1070,386 1073,383 1076,382.6 1079,385.1 1082,383.7 1085,382 1088,385.7 1091,384.3 1094,385.1 1097,382 1100,385.6 1103,382.3 1106,386 1109,384.4 1112,384.2 1115,385.3 1118,387.1 1121,384.3 1124,383.8 1127,385.6 1130,384.3 1133,383.6 1136,383.8 1139,383.2 1142,383.7 1145,384.1 1148,384 1151,386 1154,384 1157,385 1160,383.7 1163,384.6 1166,383.5 1169,384.8 1172,384.1 1175,387.6 1178,387.1 1181,385.8 1184,387.4 1187,389.6 1190,386.1 1193,389.4 1196,387.7 1199,388 1202,389.4 1205,387.3 1208,387.6 1211,388.3 1214,389.4 1217,386.4 1220,388.4 1223,387.8 1226,387.4 1229,386.4 1232,386.1 1235,384.9 1238,385.4 1241,385.3 1244,388.3 1247,386.3 1250,386 1253,385.8 1256,389.1 1259,389.2 1262,388.2 1265,386.4" stroke="#2f8a2f" stroke-width="1" fill="none"/><polyline points="41,387 44,386.9 47,386.8 50,386.8 53,386.8 56,386.9 59,387 62,387.1 65,387.3 68,387.5 71,387.6 74,387.8 77,387.9 80,388 83,388 86,388 89,387.9 92,387.7 95,387.4 98,387.2 101,386.8 104,386.5 107,386.2 110,385.8 113,385.5 116,385.3 119,385.1 122,385 125,384.9 128,384.9 131,384.9 134,385 137,385.1 140,385.2 143,385.3 146,385.4 149,385.4 152,385.4 155,385.4 158,385.3 161,385.2 164,385 167,384.8 170,384.6 173,384.4 176,384.2 179,384 182,383.8 185,383.7 188,383.7 191,383.8 194,383.9 197,384 200,384.3 203,384.5 206,384.9 209,385.2 212,385.5 215,385.8 218,386 221,386.3 224,386.4 227,386.5 230,386.6 233,386.6 236,386.6 239,386.5 242,386.4 245,386.3 248,386.2 251,386.2 254,386.2 257,386.2 260,386.3 263,386.4 266,386.6 269,386.8 272,387.1 275,387.4 278,387.6 281,387.9 284,388.1 287,388.2 290,388.4 293,388.4 296,388.4 299,388.3 302,388.1 305,387.9 308,387.6 311,387.4 314,387.1 317,386.8 320,386.5 323,386.3 326,386.1 329,386 332,385.9 335,385.9 338,385.9 341,386 344,386.1 347,386.2 350,386.3 353,386.3 356,386.3 359,386.3 362,386.2 365,386.1 368,385.9 371,385.7 374,385.4 377,385.1 380,384.8 383,384.5 386,384.2 389,384 392,383.8 395,383.7 398,383.6 401,383.7 404,383.7 407,383.9 410,384.1 413,384.3 416,384.5 419,384.8 422,385 425,385.2 428,385.4 431,385.5 434,385.6 437,385.6 440,385.6 443,385.5 446,385.4 449,385.3 452,385.3 455,385.2 458,385.1 461,385.1 464,385.2 467,385.3 470,385.5 473,385.7 476,385.9 479,386.3 482,386.6 485,386.9 488,387.2 491,387.5 494,387.8 497,388 500,388.1 503,388.2 506,388.2 509,388.1 512,388 515,387.8 518,387.6 521,387.4 524,387.2 527,387 530,386.9 533,386.8 536,386.7 539,386.7 542,386.7 545,386.8 548,386.9 551,387 554,387.2 557,387.3 560,387.3 563,387.4 566,387.4 569,387.3 572,387.2 575,387 578,386.7 581,386.5 584,386.1 587,385.8 590,385.4 593,385.1 596,384.8 599,384.6 602,384.4 605,384.2 608,384.2 611,384.2 614,384.2 617,384.3 620,384.5 623,384.6 626,384.8 629,384.9 632,385.1 635,385.2 638,385.2 641,385.2 644,385.1 647,385 650,384.9 653,384.8 656,384.6 659,384.4 662,384.3 665,384.2 668,384.2 671,384.2 674,384.3 677,384.4 680,384.6 683,384.9 686,385.2 689,385.5 692,385.8 695,386.2 698,386.5 701,386.8 704,387 707,387.2 710,387.3 713,387.4 716,387.4 719,387.3 722,387.3 725,387.1 728,387 731,386.9 734,386.8 737,386.7 740,386.7 743,386.7 746,386.8 749,386.9 752,387 755,387.2 758,387.4 761,387.6 764,387.8 767,388 770,388.1 773,388.2 776,388.2 779,388.1 782,387.9 785,387.7 788,387.5 791,387.2 794,386.9 797,386.5 800,386.2 803,385.9 806,385.6 809,385.4 812,385.3 815,385.2 818,385.1 821,385.1 824,385.2 827,385.3 830,385.4 833,385.5 836,385.5 839,385.6 842,385.6 845,385.6 848,385.5 851,385.4 854,385.2 857,385 860,384.8 863,384.5 866,384.3 869,384 872,383.9 875,383.7 878,383.7 881,383.6 884,383.7 887,383.8 890,384 893,384.3 896,384.6 899,384.9 902,385.2 905,385.4 908,385.7 911,385.9 914,386.1 917,386.2 920,386.3 923,386.3 926,386.3 929,386.2 932,386.2 935,386.1 938,386 941,385.9 944,385.9 947,385.9 950,386 953,386.2 956,386.3 959,386.6 962,386.8 965,387.1 968,387.4 971,387.7 974,387.9 977,388.1 980,388.3 983,388.4 986,388.4 989,388.3 992,388.2 995,388.1 998,387.8 1001,387.6 1004,387.3 1007,387.1 1010,386.8 1013,386.6 1016,386.4 1019,386.3 1022,386.2 1025,386.2 1028,386.2 1031,386.2 1034,386.3 1037,386.4 1040,386.5 1043,386.6 1046,386.6 1049,386.6 1052,386.5 1055,386.4 1058,386.2 1061,386 1064,385.7 1067,385.4 1070,385.1 1073,384.8 1076,384.5 1079,384.2 1082,384 1085,383.9 1088,383.8 1091,383.7 1094,383.8 1097,383.9 1100,384 1103,384.2 1106,384.4 1109,384.6 1112,384.9 1115,385.1 1118,385.2 1121,385.3 1124,385.4 1127,385.4 1130,385.4 1133,385.4 1136,385.3 1139,385.2 1142,385 1145,385 1148,384.9 1151,384.9 1154,384.9 1157,385 1160,385.1 1163,385.3 1166,385.6 1169,385.9 1172,386.2 1175,386.5 1178,386.9 1181,387.2 1184,387.5 1187,387.7 1190,387.9 1193,388 1196,388 1199,388 1202,387.9 1205,387.8 1208,387.6 1211,387.4 1214,387.3 1217,387.1 1220,386.9 1223,386.8 1226,386.8 1229,386.8 1232,386.8 1235,386.9 1238,387 1241,387.1 1244,387.3 1247,387.4 1250,387.5 1253,387.6 1256,387.6 1259,387.6 1262,387.5 1265,387.3" stroke="#111" stroke-width="1.2" fill="none"/><rect x="0" y="389" width="1278" height="16" fill="#f0f0f0"/><rect x="231" y="391" width="347" height="12" fill="#cdcdcd"/><path d="M10 394 L6.5 397.5 L10 401 M1267 394 L1270.5 397.5 L1267 401" stroke="#606060" stroke-width="1.5" fill="none"/></svg><!-- title bar -->
<div class="a" style="left:0;top:0;width:1278px;height:1px;background:#5aa9ad"></div>
<div class="a" style="left:0;top:1px;width:1278px;height:30px;background:#fff"></div>
<div class="a" style="left:0;top:31px;width:1278px;height:3px;background:#f0f0f0"></div>
<svg class="a" style="left:0;top:0" width="30" height="30">
<path d="M16 9 C11 8.6 7 11.5 7.2 15 C7.3 17.5 9.3 19.3 12.2 19.5" stroke="#2c78b8" stroke-width="1.5" fill="none"/>
<path d="M14.3 20.8 C19.5 21.2 23 18 22.8 14.2 C22.6 11.8 20.5 10.3 17.5 10.6" stroke="#e3883a" stroke-width="1.5" fill="none"/>
<path d="M11 16.5 C10.8 14 13 12 15.5 11.8" stroke="#b8cfe0" stroke-width="0.9" fill="none"/>
</svg>
<div class="t" style="left:29px;top:9px;font-size:11px;color:#111">^GSPC</div>
<div class="a" style="left:1160px;top:15px;width:10px;height:1px;background:#000"></div>
<div class="a" style="left:1205px;top:10px;width:10px;height:10px;box-sizing:border-box;border:1px solid #000"></div>
<svg class="a" style="left:1250px;top:10px" width="12" height="11"><path d="M0.5 0.5 L11 10.5 M11 0.5 L0.5 10.5" stroke="#000" stroke-width="1.1"/></svg>
<!-- info box -->
<div class="t" style="left:11px;top:140px;font-size:12px;font-weight:bold;color:#e81010">^GSPC</div>
<div class="a" style="left:0;top:154px;width:170px;height:133px;box-sizing:border-box;background:#fff;border-top:3px solid #555;border-left:3px solid #555;border-right:2px solid #dcdcdc;border-bottom:2px solid #dcdcdc"></div>
<div class="a" style="left:9px;top:156px;font-size:13px;line-height:16px;white-space:nowrap">2/6/2014<br>O:1752.99<br>H:1774.06<br>L:1752.99<br>C:1773.43<br>D_Fast14::FastK:39.881<br>D_Fast14::FastD:13.34987<br>V:3825410000</div>
<!-- controls -->
<div class="t" style="left:10px;top:415px">Symbol</div>
<div class="sunk" style="left:8px;top:431px;width:85px;height:19px"></div>
<div class="t" style="left:11px;top:434px">^GSPC</div>
<div class="dd" style="left:76px;top:433px;width:16px;height:16px"></div>
<div class="t" style="left:101px;top:415px">TimeFrame</div>
<div class="sunk" style="left:101px;top:431px;width:88px;height:19px"></div>
<div class="t" style="left:104px;top:434px">Daily</div>
<div class="dd" style="left:172px;top:433px;width:16px;height:16px"></div>
<div class="t" style="left:199px;top:415px">Start DateTime</div>
<div class="sunk" style="left:197px;top:431px;width:99px;height:18px"></div>
<div class="t" style="left:207px;top:434px;font-size:11.6px">6/21/2013</div>
<div class="dd" style="left:279px;top:433px;width:16px;height:15px"></div>
<div class="t" style="left:306px;top:415px">Shift</div>
<div class="sunk" style="left:304px;top:431px;width:33px;height:18px"></div>
<div class="t" style="left:307px;top:434px">0</div>
<div class="btn" style="left:344px;top:431px;width:55px;height:20px;line-height:18px">Apply</div>
<div class="t" style="left:465px;top:415px">Y Range</div>
<div class="t" style="left:431px;top:434px">Price</div>
<div class="btn" style="left:466px;top:431px;width:22px;height:20px;line-height:18px">+</div>
<div class="btn" style="left:490px;top:431px;width:22px;height:20px;line-height:18px">-</div>
<div class="t" style="left:555px;top:415px">Saved Charts</div>
<div class="sunk" style="left:524px;top:431px;width:120px;height:19px"></div>
<div class="t" style="left:527px;top:434px">N/A</div>
<div class="dd" style="left:627px;top:433px;width:16px;height:16px"></div>
<div class="cb" style="left:524px;top:455px"></div>
<svg class="a" style="left:525px;top:456px" width="11" height="11"><path d="M2 5.5 L4.5 8.3 L9 2.5" stroke="#000" stroke-width="2.2" fill="none"/></svg>
<div class="t" style="left:542px;top:456px">Candlesticks</div>
<div class="t lnk" style="left:653px;top:429px">Chart Save</div>
<div class="t lnk" style="left:734px;top:429px">Chart Delete</div>
<div class="t lnk" style="left:653px;top:449px">Chart Save As</div>
<div class="cb" style="left:804px;top:417px"></div>
<div class="t" style="left:822px;top:417px">Hide Annotation Text</div>
<!-- tabs -->
<div class="a" style="left:8px;top:490px;width:865px;height:224px;box-sizing:border-box;background:#fff;border-right:2px solid #8a8a8a;border-bottom:2px solid #8a8a8a;border-left:1px solid #fff"></div>
<div class="a" style="left:8px;top:471px;width:50px;height:20px;box-sizing:border-box;background:#f3f3f3;border-right:2px solid #8a8a8a;border-top:1px solid #fff;border-left:1px solid #fff"></div>
<div class="t" style="left:15px;top:474px;letter-spacing:-0.28px">Studies</div>
<div class="tab" style="left:58px;width:48px"></div><div class="t" style="left:62px;top:475px;letter-spacing:-0.28px">ZigZags</div>
<div class="tab" style="left:106px;width:45px"></div><div class="t" style="left:113px;top:475px;letter-spacing:-0.28px">Angles</div>
<div class="tab" style="left:151px;width:71px"></div><div class="t" style="left:157px;top:475px;letter-spacing:-0.28px">Square Outs</div>
<div class="tab" style="left:222px;width:42px"></div><div class="t" style="left:228px;top:475px;letter-spacing:-0.28px">HoD</div>
<div class="tab" style="left:264px;width:49px"></div><div class="t" style="left:270px;top:475px;letter-spacing:-0.28px">Fractals</div>
<div class="tab" style="left:313px;width:93px"></div><div class="t" style="left:319px;top:475px;letter-spacing:-0.28px">Import Ephemeris</div>
<div class="tab" style="left:406px;width:90px"></div><div class="t" style="left:412px;top:475px;letter-spacing:-0.28px">Time Projections</div>
<div class="tab" style="left:496px;width:117px"></div><div class="t" style="left:502px;top:475px;letter-spacing:-0.28px">PlanetTimeProjections</div>
<div class="tab" style="left:613px;width:81px"></div><div class="t" style="left:619px;top:475px;letter-spacing:-0.28px">PlanetaryLines</div>
<div class="tab" style="left:694px;width:47px"></div><div class="t" style="left:700px;top:475px;letter-spacing:-0.28px">Repeat</div>
<!-- studies page -->
<div class="cb" style="left:11px;top:495px"></div><div class="t" style="left:29px;top:496px">Show Price as Line</div>
<div class="cb" style="left:11px;top:512px"></div><div class="t" style="left:29px;top:513px">Show Volume</div>
<div class="sunk" style="left:11px;top:531px;width:158px;height:159px;border-top:2px solid #8a8a8a;border-left:2px solid #8a8a8a"></div>
<div class="a" style="left:13px;top:533px;width:155px;height:13px;background:#3399ff"></div>
<div class="t" style="left:15px;top:533px;color:#fff">D_Fast14</div>
<div class="a" style="left:176px;top:555px;width:22px;height:23px;box-sizing:border-box;border-right:2px solid #111;border-bottom:2px solid #111"></div>
<div class="t" style="left:183px;top:560px;font-size:10px">&gt;</div>
<div class="cb" style="left:11px;top:696px"></div><div class="t" style="left:29px;top:697px">Show Expanded Study Name</div>
<!-- grid -->
<div class="a" style="left:204px;top:495px;width:659px;height:202px;background:#ababab;border-top:1px solid #e0e0e0;box-sizing:border-box"></div>
<div class="gh" style="left:204px;width:96px"></div><div class="t" style="left:208px;top:499px">StudyName</div>
<div class="gc" style="left:204px;top:515px;width:96px;background:#3399ff"></div>
<div class="t" style="left:208px;top:518px;color:#fff">D_Fast14</div>
<div class="gc" style="left:204px;top:534px;width:96px;background:#fff"></div>
<div class="t" style="left:208px;top:537px;color:#000">D_Fast14</div>
<div class="gh" style="left:300px;width:95px"></div><div class="t" style="left:304px;top:499px">ResultName</div>
<div class="gc" style="left:300px;top:515px;width:95px;background:#fff"></div>
<div class="t" style="left:304px;top:518px;color:#000">D_Fast14::FastK</div>
<div class="gc" style="left:300px;top:534px;width:95px;background:#fff"></div>
<div class="t" style="left:304px;top:537px;color:#000">D_Fast14::FastD</div>
<div class="gh" style="left:395px;width:96px"></div><div class="t" style="left:399px;top:499px">Color</div>
<div class="gc" style="left:395px;top:515px;width:96px;background:#fff"></div>
<div class="t" style="left:399px;top:518px;color:#000">Green</div>
<div class="gc" style="left:395px;top:534px;width:96px;background:#fff"></div>
<div class="t" style="left:399px;top:537px;color:#000">Black</div>
<div class="gh" style="left:491px;width:95px"></div><div class="t" style="left:495px;top:499px">Thickness</div>
<div class="gc" style="left:491px;top:515px;width:95px;background:#fff"></div>
<div class="t" style="left:495px;top:518px;color:#000">ThinSolid</div>
<div class="gc" style="left:491px;top:534px;width:95px;background:#fff"></div>
<div class="t" style="left:495px;top:537px;color:#000">ThinSolid</div>
<div class="gh" style="left:586px;width:95px"></div><div class="t" style="left:590px;top:499px">LineType</div>
<div class="gc" style="left:586px;top:515px;width:95px;background:#fff"></div>
<div class="t" style="left:590px;top:518px;color:#000">Line</div>
<div class="gc" style="left:586px;top:534px;width:95px;background:#fff"></div>
<div class="t" style="left:590px;top:537px;color:#000">Line</div>
<div class="gh" style="left:681px;width:95px"></div><div class="t" style="left:685px;top:499px">Visible</div>
<div class="gc" style="left:681px;top:515px;width:95px;background:#fff"></div>
<div class="t" style="left:685px;top:518px;color:#000">True</div>
<div class="gc" style="left:681px;top:534px;width:95px;background:#fff"></div>
<div class="t" style="left:685px;top:537px;color:#000">True</div>
<div class="gh" style="left:776px;width:87px"></div><div class="t" style="left:780px;top:499px">AnnotationName</div>
<div class="gc" style="left:776px;top:515px;width:87px;background:#fff"></div>
<div class="gc" style="left:776px;top:534px;width:87px;background:#fff"></div>
<div class="a" style="left:204px;top:697px;width:659px;height:14px;background:#f0f0f0"></div>
<div class="a" style="left:222px;top:698px;width:617px;height:12px;background:#cdcdcd"></div>
<svg class="a" style="left:204px;top:697px" width="659" height="14"><path d="M11 3.5 L7.5 7 L11 10.5 M648 3.5 L651.5 7 L648 10.5" stroke="#606060" stroke-width="1.5" fill="none"/></svg>
<div class="sunk" style="left:875px;top:473px;width:401px;height:237px;border-top:2px solid #707070;border-left:2px solid #707070"></div>
<div class="a" style="left:877px;top:475px;width:120px;height:13px;background:#3399ff"></div>
<div class="t" style="left:878px;top:475px;color:#fff">N/A</div></body></html>
